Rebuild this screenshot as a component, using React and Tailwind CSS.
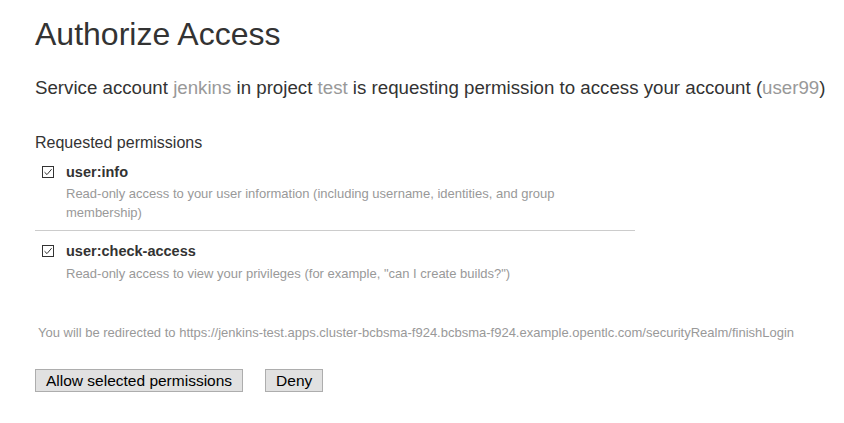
import React from 'react'

const permissions = [
    {
        name: "user:info",
        description: "Read-only access to your user information (including username, identities, and group membership)",
    },
    {
        name: "user:check-access",
        description: 'Read-only access to view your privileges (for example, "can I create builds?")',
    },
];

function Check() {
    return (
        <span className="mt-[3px] flex h-[12px] w-[12px] shrink-0 items-center justify-center border border-[#333] bg-white">
            <svg width="10" height="10" viewBox="0 0 10 10" fill="none">
                <path d="M1.5 5.2 L4 7.6 L8.6 2.2" stroke="#333" strokeWidth="1" />
            </svg>
        </span>
    );
}

export default function App() {
    //
    return (
        <div className="min-h-screen bg-white px-[35px] pt-[14px] text-[#333]"
            style={{ fontFamily: '"Liberation Sans", Arial, sans-serif' }}>
            <h1 className="text-[32px] leading-[40px]">Authorize Access</h1>
            <p className="mt-[23px] whitespace-nowrap text-[18.7px] leading-[22px]">
                Service account <span className="text-[#999]">jenkins</span> in project <span className="text-[#999]">test</span> is requesting permission to access your account (<span className="text-[#999]">user99</span>)
            </p>
            <div className="mt-[34px] w-[600px]">
                <h3 className="text-[16px] leading-[20px]">Requested permissions</h3>
                <ul className="mt-[10px]">
                    {permissions.map((p, i) => (
                        <li key={p.name}
                            className={`flex gap-[12px] pl-[7px] pr-[40px] ${i === 0 ? "border-b border-[#ccc] pb-[8px]" : "pt-[11px]"}`}>
                            <Check />
                            <div>
                                <p className="text-[14.5px] font-bold leading-[18px]">{p.name}</p>
                                <p className={`${i === 0 ? "mt-[3px]" : "mt-[4px]"} text-[13px] leading-[19px] text-[#999]`}>{p.description}</p>
                            </div>
                        </li>
                    ))}
                </ul>
            </div>
            <p className="mt-[42px] whitespace-nowrap pl-[3px] text-[13px] leading-[16px] text-[#999]">
                You will be redirected to https://jenkins-test.apps.cluster-bcbsma-f924.bcbsma-f924.example.opentlc.com/securityRealm/finishLogin
            </p>
            <div className="mt-[28px] flex gap-[22px]">
                <button className="h-[23px] border border-[#adadad] bg-[#e1e1e1] px-[10px] text-[15.5px] leading-[20px] text-black">
                    Allow selected permissions
                </button>
                <button className="h-[23px] border border-[#adadad] bg-[#e1e1e1] px-[10px] text-[15.5px] leading-[20px] text-black">
                    Deny
                </button>
            </div>
        </div>
    )
}
